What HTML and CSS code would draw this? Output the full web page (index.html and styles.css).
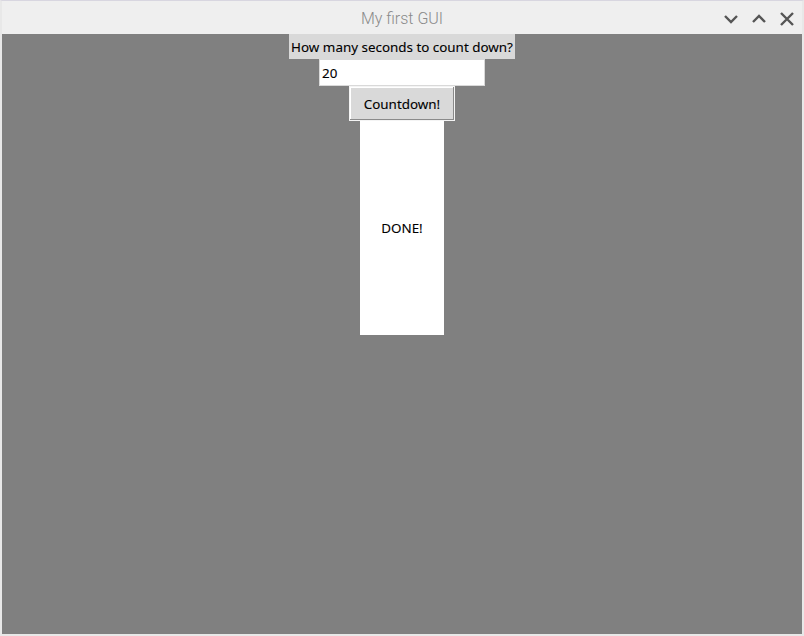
FILE: index.html
```html
<!DOCTYPE html>
<html>
<head>
<meta charset="utf-8">
<link rel="stylesheet" href="styles.css">
</head>
<body>
<div class="window">
  <div class="titlebar">
    <span class="title">My first GUI</span>
    <div class="controls">
      <svg class="ctl" width="18" height="18" viewBox="0 0 18 18"><path d="M3 6 L9 12 L15 6" fill="none" stroke="#555" stroke-width="2.4"/></svg>
      <svg class="ctl" width="18" height="18" viewBox="0 0 18 18"><path d="M3 12 L9 6 L15 12" fill="none" stroke="#555" stroke-width="2.4"/></svg>
      <svg class="ctl" width="18" height="18" viewBox="0 0 18 18"><path d="M3 3 L15 15 M15 3 L3 15" fill="none" stroke="#555" stroke-width="2.4"/></svg>
    </div>
  </div>
  <div class="content">
    <div class="prompt">How many seconds to count down?</div>
    <div class="entry">20</div>
    <div class="button">Countdown!</div>
    <div class="result">DONE!</div>
  </div>
</div>
</body>
</html>
```
FILE: styles.css
```css
html, body {
  margin: 0;
  padding: 0;
  width: 804px;
  height: 636px;
  overflow: hidden;
}
.window {
  width: 804px;
  height: 636px;
  box-sizing: border-box;
  background: #efefef;
  border: 2px solid #e8e8e8;
  border-top: 1px solid #d8d6e0;
  display: flex;
  flex-direction: column;
}
.titlebar {
  height: 33px;
  position: relative;
  display: flex;
  align-items: center;
  justify-content: center;
  padding-top: 2px;
  box-sizing: border-box;
  flex: none;
}
.title {
  font-family: Roboto, "Liberation Sans", sans-serif;
  font-weight: 300;
  font-size: 16px;
  color: #8a8a8a;
}
.controls {
  position: absolute;
  right: 6px;
  top: 9px;
  display: flex;
  gap: 10px;
}
.content {
  flex: 1;
  background: #808080;
  display: flex;
  flex-direction: column;
  align-items: center;
  font-family: "Noto Sans", "DejaVu Sans", sans-serif;
  font-size: 13.4px;
  color: #000;
  -webkit-text-stroke: 0.1px #000;
}
.prompt {
  background: #d9d9d9;
  height: 25px;
  width: 226px;
  display: flex;
  align-items: center;
  justify-content: center;
  white-space: nowrap;
}
.entry {
  box-sizing: border-box;
  width: 166px;
  height: 27px;
  background: #fff;
  border: 1px solid #d9d9d9;
  display: flex;
  align-items: center;
  padding-left: 2px;
}
.button {
  box-sizing: border-box;
  width: 106px;
  height: 35px;
  background: #d9d9d9;
  border: 1px solid #f4f4f4;
  box-shadow: inset -1px -1px 0 #8a8a8a, inset 1px 1px 0 #ffffff;
  display: flex;
  align-items: center;
  justify-content: center;
}
.result {
  width: 84px;
  height: 214px;
  background: #fff;
  display: flex;
  align-items: center;
  justify-content: center;
}
```
